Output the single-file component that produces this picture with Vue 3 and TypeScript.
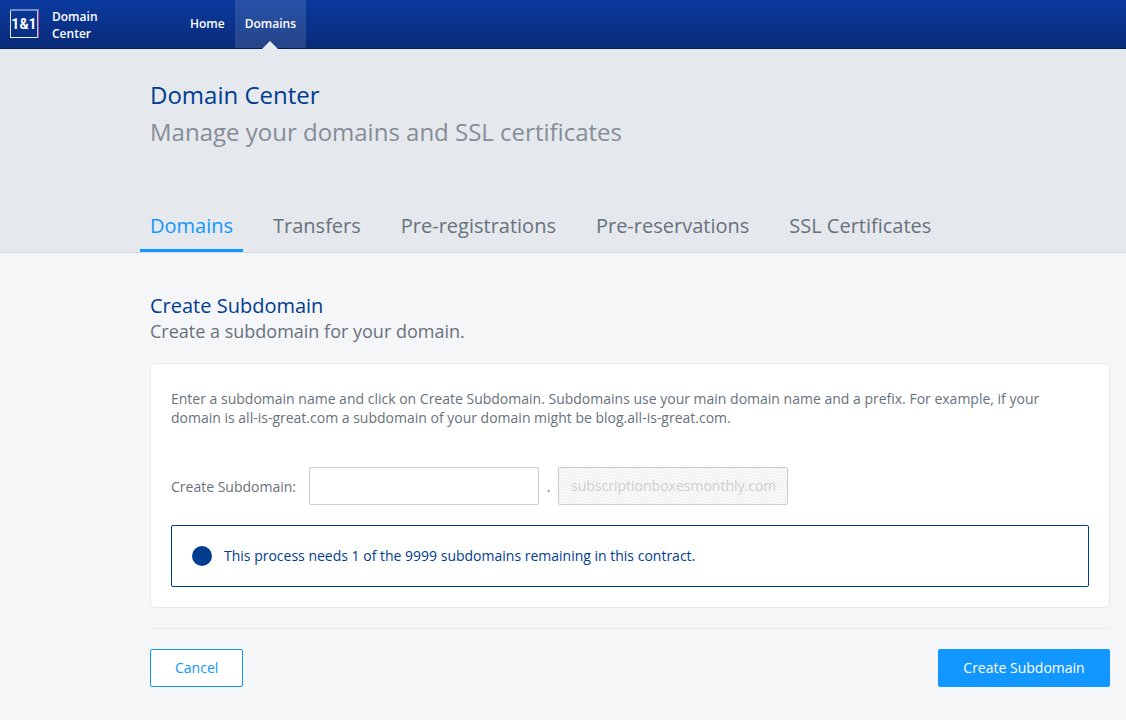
<script setup lang="ts">
import { ref } from 'vue'

interface NavItem {
  label: string
  active: boolean
}

const mainNav: NavItem[] = [
  { label: 'Home', active: false },
  { label: 'Domains', active: true },
]

const tabs: NavItem[] = [
  { label: 'Domains', active: true },
  { label: 'Transfers', active: false },
  { label: 'Pre-registrations', active: false },
  { label: 'Pre-reservations', active: false },
  { label: 'SSL Certificates', active: false },
]

const prefix = ref('')
const domain = 'subscriptionboxesmonthly.com'
const remaining = 9999
</script>

<template>
  <div class="page">
    <header class="topbar">
      <a class="brand" href="#">
        <svg class="logo" viewBox="0 0 30 30" width="30" height="30" aria-hidden="true">
          <rect x="0" y="0" width="29" height="2" fill="#6d8fd0" />
          <rect x="0" y="2" width="1" height="27" fill="#e4e6df" />
          <rect x="0" y="28" width="29" height="1" fill="#eef1f8" />
          <rect x="27" y="1" width="1" height="28" fill="#b9c4e4" />
          <rect x="28" y="1" width="1" height="28" fill="#b0489a" />
          <text class="logo-text" x="14" y="20" text-anchor="middle">1&amp;1</text>
        </svg>
        <span class="brand-name">Domain<br />Center</span>
      </a>
      <nav class="main-nav">
        <a
          v-for="item in mainNav"
          :key="item.label"
          href="#"
          class="main-link"
          :class="{ active: item.active }"
        >{{ item.label }}</a>
      </nav>
    </header>

    <section class="hero">
      <h1>Domain Center</h1>
      <p class="tagline">Manage your domains and SSL certificates</p>
      <nav class="tabs">
        <a v-for="tab in tabs" :key="tab.label" href="#" class="tab" :class="{ active: tab.active }">{{
          tab.label
        }}</a>
      </nav>
    </section>

    <main class="content">
      <h2>Create Subdomain</h2>
      <p class="lead">Create a subdomain for your domain.</p>

      <form @submit.prevent>
        <div class="card">
          <p class="intro">
            Enter a subdomain name and click on Create Subdomain. Subdomains use your main domain name and a
            prefix. For example, if your domain is all-is-great.com a subdomain of your domain might be
            blog.all-is-great.com.
          </p>
          <div class="field-row">
            <label for="prefix">Create Subdomain:</label>
            <input id="prefix" v-model="prefix" class="field" type="text" />
            <span class="dot">.</span>
            <input class="field" type="text" :value="domain" aria-label="Domain" disabled />
          </div>
          <div class="notice">
            <span class="notice-icon"></span>
            <span class="notice-text">This process needs 1 of the {{ remaining }} subdomains remaining in this contract.</span>
          </div>
        </div>

        <div class="actions">
          <button type="button" class="btn secondary">Cancel</button>
          <button type="submit" class="btn primary">Create Subdomain</button>
        </div>
      </form>
    </main>
  </div>
</template>

<style>
body {
  margin: 0;
  background: #f4f6f8;
}
</style>

<style scoped>
.page,
.page * {
  box-sizing: border-box;
}

.page {
  min-height: 100vh;
  font-family: 'Open Sans', 'Noto Sans', sans-serif;
  font-size: 14px;
  line-height: 19px;
  color: #68727d;
}

h1,
h2,
p {
  margin: 0;
  font-weight: 400;
}

a {
  text-decoration: none;
}

.topbar {
  display: flex;
  height: 49px;
  border-bottom: 1px solid #04205f;
  background: linear-gradient(#0b3a9f, #082b78);
  font-size: 12px;
  font-weight: 600;
  color: #fff;
}

.brand {
  display: flex;
  align-items: center;
  gap: 12px;
  width: 180px;
  padding-left: 10px;
  line-height: 17px;
  color: #fff;
}

.brand-name {
  padding-top: 2px;
}

.logo-text {
  font-family: Roboto, sans-serif;
  font-size: 14px;
  font-weight: 700;
  fill: #fff;
}

.main-nav {
  display: flex;
}

.main-link {
  position: relative;
  padding: 0 10px;
  line-height: 48px;
  color: #fff;
}

.main-link.active {
  background: rgba(255, 255, 255, 0.12);
}

.main-link.active::after {
  content: '';
  position: absolute;
  bottom: -1px;
  left: 50%;
  margin-left: -8px;
  border: 8px solid transparent;
  border-top: 0;
  border-bottom-color: #e9ebee;
}

.hero {
  padding: 27px 16px 0 150px;
  border-bottom: 1px solid #d3dbe1;
  background: #e5e8ed;
}

h1 {
  font-size: 24px;
  line-height: 37px;
  color: #003d8f;
}

.tagline {
  font-size: 24px;
  line-height: 37px;
  color: #858d97;
}

.tabs {
  display: flex;
  gap: 20px;
  margin: 52px 0 0 -10px;
}

.tab {
  padding: 8px 10px 7px;
  border-bottom: 3px solid transparent;
  font-size: 20px;
  line-height: 32px;
  white-space: nowrap;
  color: #68727d;
}

.tab.active {
  border-color: #1296ff;
  color: #1296ff;
}

.content {
  padding: 40px 16px 32px 150px;
}

h2 {
  font-size: 20px;
  line-height: 26px;
  color: #003d8f;
}

.lead {
  font-size: 18px;
  line-height: 24px;
}

.card {
  margin-top: 20px;
  padding: 25px 20px 20px;
  border: 1px solid #e5e8ed;
  border-radius: 5px;
  background: #fff;
}

.field-row {
  display: flex;
  align-items: center;
  margin: 40px 0 20px;
}

.field-row label {
  margin-right: 13px;
}

.dot {
  width: 19px;
  text-align: center;
}

.field {
  width: 230px;
  height: 38px;
  padding: 0 12px 2px;
  border: 1px solid #c8ccd1;
  border-radius: 2px;
  background: #fff;
  font: inherit;
  color: #68727d;
}

.field:disabled {
  background: linear-gradient(135deg, #fff 34%, #e6e6e6 50%, #fff 66%) 0 0 / 3px 3px;
  color: #ccced0;
}

.notice {
  display: flex;
  align-items: center;
  gap: 12px;
  min-height: 62px;
  padding: 12px 20px;
  border: 1px solid #003d8f;
  border-radius: 2px;
  color: #003d8f;
}

.notice-icon {
  width: 20px;
  height: 20px;
  border-radius: 50%;
  background: #003d8f;
}

.notice-text {
  padding-bottom: 2px;
}

.actions {
  display: flex;
  justify-content: space-between;
  margin-top: 20px;
  padding-top: 20px;
  border-top: 1px solid #e5e8ed;
}

.btn {
  height: 38px;
  padding: 0 24px 2px;
  border: 1px solid #1296ff;
  border-radius: 2px;
  font: inherit;
  cursor: pointer;
}

.secondary {
  background: #fff;
  color: #1296ff;
}

.primary {
  min-width: 172px;
  background: #1296ff;
  color: #fff;
}
</style>
